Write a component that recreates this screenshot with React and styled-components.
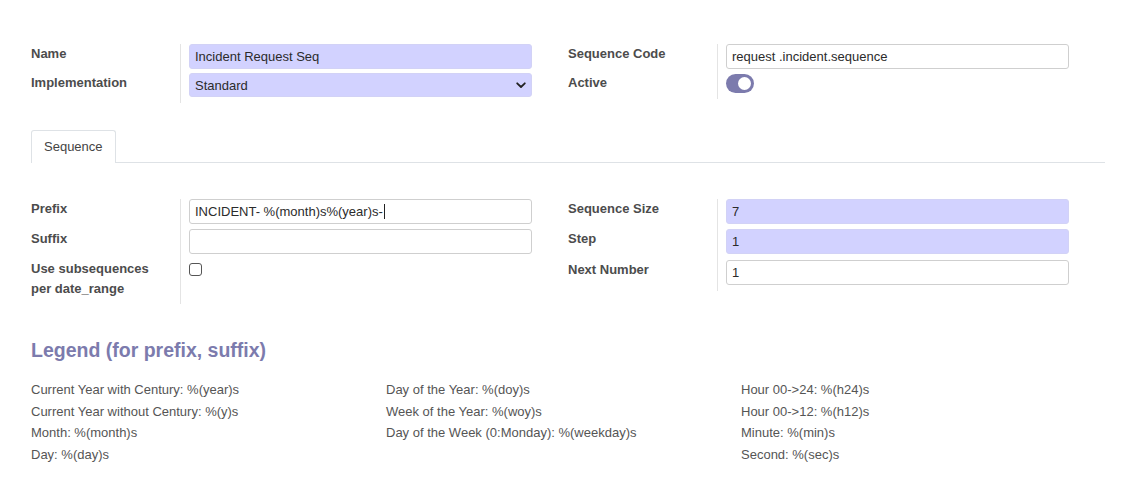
import React from "react";
import styled, { createGlobalStyle } from "styled-components";

const GlobalStyle = createGlobalStyle`
  html, body { margin: 0; padding: 0; background: #ffffff; }
  body {
    font-family: "Liberation Sans", Arial, sans-serif;
    font-size: 13px;
    color: #4c4c4c;
  }
`;

const Sheet = styled.div`
  width: 1074px;
  padding: 44px 0 0 31px;
`;

const GroupRow = styled.div`
  display: grid;
  grid-template-columns: 501px 501px;
  column-gap: 36px;
  align-items: start;
`;

const InnerGroup = styled.div`
  display: grid;
  grid-template-columns: 149px 352px;
  align-content: start;
`;

const Label = styled.div`
  font-weight: bold;
  font-size: 13px;
  line-height: 19.5px;
  color: #4c4c4c;
  padding-bottom: ${(p) => p.$gap}px;
`;

const FieldCell = styled.div`
  border-left: 1px solid #e4e4e4;
  padding: 0 0 ${(p) => p.$gap}px 8px;
  display: flex;
  align-items: flex-start;
`;

const Input = styled.div`
  box-sizing: border-box;
  width: 343px;
  height: 25px;
  display: flex;
  align-items: center;
  padding: 0 5px;
  border-radius: 3px;
  border: 1px solid ${(p) => (p.$required ? "#d2d2f6" : "#cfcfcf")};
  background: ${(p) => (p.$required ? "#d2d2ff" : "#ffffff")};
  color: #2b2b2b;
  font-size: 13px;
  white-space: nowrap;
`;

const Select = styled(Input)`
  justify-content: space-between;
  height: 24px;
`;

const Caret = styled.span`
  display: inline-block;
  width: 1px;
  height: 15px;
  background: #222;
  margin-left: 1px;
`;

const Toggle = styled.div`
  margin-top: 1px;
  width: 28px;
  height: 19px;
  border-radius: 10px;
  background: #7c7bad;
  display: flex;
  align-items: center;
  justify-content: flex-end;
  padding: 0 3px;
  box-sizing: border-box;
`;

const Knob = styled.div`
  width: 13px;
  height: 13px;
  border-radius: 50%;
  background: #ffffff;
`;

const Checkbox = styled.div`
  margin-top: 4px;
  box-sizing: border-box;
  width: 13px;
  height: 13px;
  border: 1.5px solid #555;
  border-radius: 3px;
  background: #fff;
`;

const TabBar = styled.div`
  margin-top: 27px;
  display: flex;
  border-bottom: 1px solid #dee2e6;
`;

const Tab = styled.div`
  height: 32px;
  line-height: 32px;
  padding: 0 12px;
  border: 1px solid #dee2e6;
  border-bottom: none;
  border-radius: 3px 3px 0 0;
  margin-bottom: -1px;
  background: #ffffff;
  color: #444;
  font-size: 13px;
`;

const SecondGroup = styled(GroupRow)`
  margin-top: 36px;
`;

const LegendTitle = styled.h3`
  margin: 34px 0 0 0;
  font-size: 19.5px;
  line-height: 24px;
  font-weight: bold;
  color: #7c7bad;
`;

const LegendGrid = styled.div`
  margin-top: 17px;
  display: grid;
  grid-template-columns: 355px 355px 355px;
`;

const LegendCol = styled.div`
  display: flex;
  flex-direction: column;
`;

const LegendItem = styled.div`
  font-size: 13px;
  line-height: 21.5px;
  color: #555;
  white-space: nowrap;
`;

const Chevron = () => (
  <svg width="10" height="7" viewBox="0 0 10 7">
    <path d="M1.2 1.3 L5 5 L8.8 1.3" fill="none" stroke="#222" strokeWidth="1.8" strokeLinecap="round" strokeLinejoin="round" />
  </svg>
);

const legend = [
  ["Current Year with Century: %(year)s", "Current Year without Century: %(y)s", "Month: %(month)s", "Day: %(day)s"],
  ["Day of the Year: %(doy)s", "Week of the Year: %(woy)s", "Day of the Week (0:Monday): %(weekday)s"],
  ["Hour 00->24: %(h24)s", "Hour 00->12: %(h12)s", "Minute: %(min)s", "Second: %(sec)s"],
];

export default function App() {
  return (
    <>
      <GlobalStyle />
      <Sheet>
        <GroupRow>
          <InnerGroup>
            <Label $gap={4}>Name</Label>
            <FieldCell $gap={4}>
              <Input $required>Incident Request Seq</Input>
            </FieldCell>
            <Label $gap={6}>Implementation</Label>
            <FieldCell $gap={6}>
              <Select $required>
                <span>Standard</span>
                <Chevron />
              </Select>
            </FieldCell>
          </InnerGroup>
          <InnerGroup>
            <Label $gap={4}>Sequence Code</Label>
            <FieldCell $gap={4}>
              <Input>request .incident.sequence</Input>
            </FieldCell>
            <Label $gap={6}>Active</Label>
            <FieldCell $gap={6}>
              <Toggle>
                <Knob />
              </Toggle>
            </FieldCell>
          </InnerGroup>
        </GroupRow>

        <TabBar>
          <Tab>Sequence</Tab>
        </TabBar>

        <SecondGroup>
          <InnerGroup>
            <Label $gap={5}>Prefix</Label>
            <FieldCell $gap={5}>
              <Input>
                INCIDENT- %(month)s%(year)s-<Caret />
              </Input>
            </FieldCell>
            <Label $gap={5}>Suffix</Label>
            <FieldCell $gap={5}>
              <Input />
            </FieldCell>
            <Label $gap={6}>
              Use subsequences
              <br />
              per date_range
            </Label>
            <FieldCell $gap={6}>
              <Checkbox />
            </FieldCell>
          </InnerGroup>
          <InnerGroup>
            <Label $gap={5}>Sequence Size</Label>
            <FieldCell $gap={5}>
              <Input $required>7</Input>
            </FieldCell>
            <Label $gap={6}>Step</Label>
            <FieldCell $gap={6}>
              <Input $required>1</Input>
            </FieldCell>
            <Label $gap={6}>Next Number</Label>
            <FieldCell $gap={6}>
              <Input>1</Input>
            </FieldCell>
          </InnerGroup>
        </SecondGroup>

        <LegendTitle>Legend (for prefix, suffix)</LegendTitle>
        <LegendGrid>
          {legend.map((col, i) => (
            <LegendCol key={i}>
              {col.map((t) => (
                <LegendItem key={t}>{t}</LegendItem>
              ))}
            </LegendCol>
          ))}
        </LegendGrid>
      </Sheet>
    </>
  );
}
